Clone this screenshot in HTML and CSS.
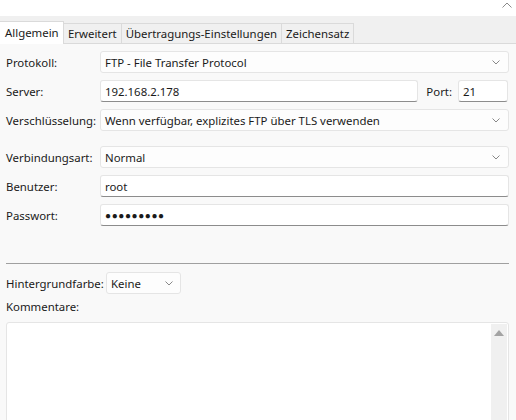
FILE: index.html
```html
<!DOCTYPE html>
<html lang="de">
<head>
<meta charset="utf-8">
<link rel="stylesheet" href="styles.css">
</head>
<body>
<div class="titlebar">
  <svg class="caret" width="10" height="6" viewBox="0 0 10 6"><path d="M0.5 5.5 L5 1 L9.5 5.5" fill="none" stroke="#8a8a8a" stroke-width="1"/></svg>
</div>
<div class="tabstrip">
  <div class="tab active">Allgemein</div>
  <div class="tab">Erweitert</div>
  <div class="tab">Übertragungs-Einstellungen</div>
  <div class="tab">Zeichensatz</div>
</div>
<div class="panel">
  <div class="group">
    <div class="row">
      <span class="label">Protokoll:</span>
      <div class="select grow"><span>FTP - File Transfer Protocol</span><svg class="chev" width="8" height="5" viewBox="0 0 8 5"><path d="M0.5 0.5 L4 4 L7.5 0.5" fill="none" stroke="#7a7a7a" stroke-width="0.9"/></svg></div>
    </div>
    <div class="row">
      <span class="label">Server:</span>
      <div class="input grow">192.168.2.178</div>
      <span class="port-label">Port:</span>
      <div class="input port">21</div>
    </div>
    <div class="row">
      <span class="label">Verschlüsselung:</span>
      <div class="select grow"><span>Wenn verfügbar, explizites FTP über TLS verwenden</span><svg class="chev" width="8" height="5" viewBox="0 0 8 5"><path d="M0.5 0.5 L4 4 L7.5 0.5" fill="none" stroke="#7a7a7a" stroke-width="0.9"/></svg></div>
    </div>
  </div>
  <div class="group">
    <div class="row">
      <span class="label">Verbindungsart:</span>
      <div class="select grow"><span>Normal</span><svg class="chev" width="8" height="5" viewBox="0 0 8 5"><path d="M0.5 0.5 L4 4 L7.5 0.5" fill="none" stroke="#7a7a7a" stroke-width="0.9"/></svg></div>
    </div>
    <div class="row">
      <span class="label">Benutzer:</span>
      <div class="input grow">root</div>
    </div>
    <div class="row">
      <span class="label">Passwort:</span>
      <div class="input grow dots">●●●●●●●●●</div>
    </div>
  </div>
  <div class="separator"></div>
  <div class="row bg-row">
    <span class="bg-label">Hintergrundfarbe:</span>
    <div class="select small"><span>Keine</span><svg class="chev" width="8" height="5" viewBox="0 0 8 5"><path d="M0.5 0.5 L4 4 L7.5 0.5" fill="none" stroke="#7a7a7a" stroke-width="0.9"/></svg></div>
  </div>
  <div class="comment-label">Kommentare:</div>
  <div class="textarea">
    <div class="scrollbar">
      <svg width="10" height="6" viewBox="0 0 10 6"><path d="M0 6 L5 0 L10 6 Z" fill="#a3a3a3"/></svg>
    </div>
  </div>
</div>
</body>
</html>
```
FILE: styles.css
```css
html, body {
  margin: 0;
  padding: 0;
  width: 516px;
  height: 420px;
  overflow: hidden;
  background: #f9f9f9;
  font-family: "Noto Sans", "Open Sans", sans-serif;
  font-size: 11.4px;
  color: #1a1a1a;
}
.titlebar {
  height: 16px;
  background: #ffffff;
  display: flex;
  justify-content: flex-end;
  align-items: flex-start;
}
.caret {
  margin: 2px 4px 0 0;
}
.tabstrip {
  background: #f0f0f0;
  height: 28px;
  display: flex;
  align-items: flex-end;
  border-bottom: 1px solid #dadada;
  box-sizing: border-box;
}
.tab {
  height: 20px;
  line-height: 19px;
  padding: 0 4px;
  border: 1px solid #dadada;
  border-bottom: none;
  border-left: none;
  background: #f0f0f0;
  box-sizing: border-box;
  white-space: nowrap;
}
.tab.active {
  background: #ffffff;
  height: 23px;
  line-height: 22px;
  margin-bottom: -1px;
  padding: 0 5px;
  border-left: none;
  width: 64px;
}
.panel {
  padding: 7px 7px 0 6px;
}
.group {
  display: flex;
  flex-direction: column;
  gap: 7px;
  margin-bottom: 15px;
}
.row {
  display: flex;
  align-items: center;
  height: 22px;
}
.label {
  width: 94px;
  flex: none;
  white-space: nowrap;
}
.grow {
  flex: 1;
}
.select {
  height: 22px;
  box-sizing: border-box;
  border: 1px solid #e5e5e5;
  border-radius: 3px;
  background: #fdfdfd;
  display: flex;
  align-items: center;
  justify-content: space-between;
  padding: 0 8px 0 4px;
}
.input {
  height: 22px;
  box-sizing: border-box;
  border: 1px solid #e5e5e5;
  border-bottom: 1px solid #8c8c8c;
  border-radius: 3px;
  background: #ffffff;
  display: flex;
  align-items: center;
  padding: 0 4px;
}
.dots {
  font-size: 10px;
  letter-spacing: 0.6px;
}
.port-label {
  margin: 0 6px 0 8px;
}
.port {
  width: 50px;
  flex: none;
  margin-right: 1px;
}
.separator {
  margin-top: 37px;
  height: 1px;
  background: #a0a0a0;
}
.bg-row {
  margin-top: 8px;
}
.bg-label {
  width: 100px;
  flex: none;
  white-space: nowrap;
}
.select.small {
  width: 75px;
  padding: 0 7px 0 4px;
}
.comment-label {
  margin-top: 4px;
  height: 18px;
  line-height: 17px;
}
.textarea {
  margin-top: 6px;
  height: 110px;
  box-sizing: border-box;
  border: 1px solid #e5e5e5;
  border-radius: 3px 3px 0 0;
  background: #ffffff;
  display: flex;
  justify-content: flex-end;
  padding: 1px 1px 0 0;
}
.scrollbar {
  width: 16px;
  background: #f0f0f0;
  display: flex;
  justify-content: center;
  padding-top: 6px;
  box-sizing: border-box;
}
```
